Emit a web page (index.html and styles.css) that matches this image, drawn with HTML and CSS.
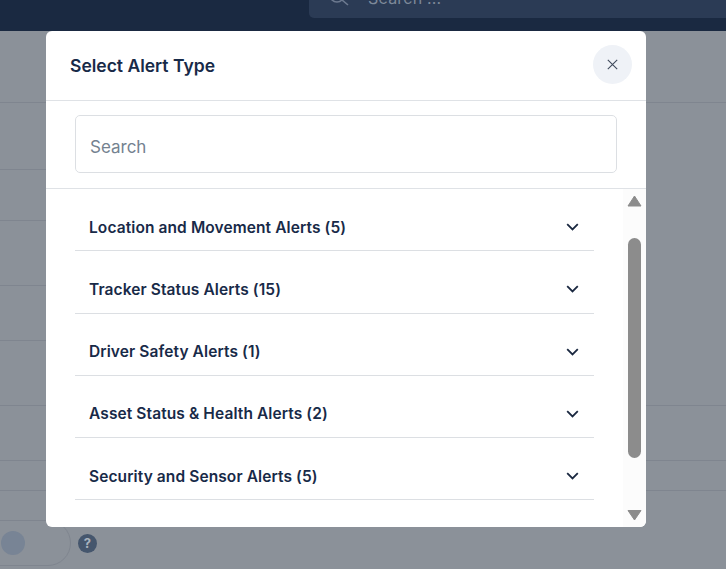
FILE: index.html
```html
<!DOCTYPE html>
<html lang="en">
<head>
<meta charset="utf-8">
<title>Select Alert Type</title>
<link rel="stylesheet" href="styles.css">
</head>
<body>
<header class="topbar">
  <div class="topsearch">
    <svg class="topsearch-icon" width="22" height="22" viewBox="0 0 22 22"><circle cx="8" cy="-5" r="7" fill="none" stroke="#6d7a90" stroke-width="1.6"/><path d="M13 0l6 5" stroke="#6d7a90" stroke-width="1.6" fill="none"/></svg>
    <span class="topsearch-text">Search ...</span>
  </div>
</header>
<main class="page">
  <div class="bgrow h71"></div>
  <div class="bgrow h67 short"></div>
  <div class="bgrow h51 short"></div>
  <div class="bgrow h65 short"></div>
  <div class="bgrow h55 short"></div>
  <div class="bgrow h65"></div>
  <div class="bgrow h55"></div>
  <div class="bgrow h30"></div>
  <div class="footer">
    <div class="toggle"><span class="knob"></span></div>
    <span class="help">?</span>
  </div>
</main>
<section class="modal">
  <div class="modal-head">
    <h2 class="modal-title">Select Alert Type</h2>
    <button class="close" type="button" aria-label="Close">
      <svg width="11" height="11" viewBox="0 0 11 11"><path d="M.8.8l9.4 9.4M10.2.8L.8 10.2" stroke="#3f4a5c" stroke-width="1.1" fill="none"/></svg>
    </button>
  </div>
  <div class="modal-search">
    <div class="input">Search</div>
  </div>
  <div class="modal-body">
    <ul class="list">
      <li class="item"><span>Location and Movement Alerts (5)</span><svg class="chev" width="13" height="8" viewBox="0 0 13 8"><path d="M1.2 1.2l5.300 5.300 5.300-5.300" stroke="#1a2840" stroke-width="1.8" fill="none"/></svg></li>
      <li class="item"><span>Tracker Status Alerts (15)</span><svg class="chev" width="13" height="8" viewBox="0 0 13 8"><path d="M1.2 1.2l5.300 5.300 5.300-5.300" stroke="#1a2840" stroke-width="1.8" fill="none"/></svg></li>
      <li class="item"><span>Driver Safety Alerts (1)</span><svg class="chev" width="13" height="8" viewBox="0 0 13 8"><path d="M1.2 1.2l5.300 5.300 5.300-5.300" stroke="#1a2840" stroke-width="1.8" fill="none"/></svg></li>
      <li class="item"><span>Asset Status &amp; Health Alerts (2)</span><svg class="chev" width="13" height="8" viewBox="0 0 13 8"><path d="M1.2 1.2l5.300 5.300 5.300-5.300" stroke="#1a2840" stroke-width="1.8" fill="none"/></svg></li>
      <li class="item"><span>Security and Sensor Alerts (5)</span><svg class="chev" width="13" height="8" viewBox="0 0 13 8"><path d="M1.2 1.2l5.300 5.300 5.300-5.300" stroke="#1a2840" stroke-width="1.8" fill="none"/></svg></li>
    </ul>
    <div class="scrollbar">
      <svg width="15" height="12" viewBox="0 0 15 12"><path d="M7.500 1L14 11H1z" fill="#8c8c8c" stroke="#8c8c8c" stroke-linejoin="round"/></svg>
      <div class="thumb"></div>
      <svg width="15" height="11" viewBox="0 0 15 11"><path d="M7.500 10L14 .5H1z" fill="#8c8c8c" stroke="#8c8c8c" stroke-linejoin="round"/></svg>
    </div>
  </div>
</section>
</body>
</html>
```
FILE: styles.css
```css
* { box-sizing: border-box; }
html, body { margin: 0; height: 100%; }
body {
  width: 726px;
  height: 569px;
  overflow: hidden;
  background: #8b9199;
  font-family: "Inter", "Liberation Sans", sans-serif;
  color: #182a48;
  position: relative;
}
.topbar {
  height: 31px;
  background: #1a2941;
  padding-left: 309px;
}
.topsearch {
  height: 18px;
  background: #2b3b55;
  border-bottom-left-radius: 5px;
  display: flex;
  overflow: hidden;
  position: relative;
}
.topsearch-icon { margin-left: 20px; flex: none; }
.topsearch-text {
  margin-left: 17px;
  margin-top: -12px;
  font-size: 16px;
  line-height: 20px;
  color: #7d8999;
  letter-spacing: .2px;
}
.page { display: flex; flex-direction: column; }
.bgrow { border-bottom: 1px solid #7f858f; flex: none; }
.short { width: 100px; }
.h71 { height: 72px; }
.h67 { height: 67px; }
.h51 { height: 51px; }
.h65 { height: 65px; }
.h55 { height: 55px; }
.h30 { height: 30px; }
.footer {
  display: flex;
  align-items: center;
  margin-top: 29px;
  margin-left: -27px;
  gap: 7px;
}
.toggle {
  width: 98px;
  height: 46px;
  border: 1px solid #7f858f;
  border-radius: 23px;
  display: flex;
  align-items: center;
  padding-left: 27px;
}
.knob {
  width: 24px;
  height: 24px;
  border-radius: 50%;
  background: #788495;
}
.help {
  width: 19px;
  height: 19px;
  border-radius: 50%;
  background: #45566d;
  color: #a9b2bd;
  font-size: 13px;
  font-weight: 700;
  line-height: 19px;
  text-align: center;
}
.modal {
  position: absolute;
  left: 46px;
  top: 31px;
  width: 600px;
  height: 496px;
  background: #fff;
  border-radius: 6px;
  display: flex;
  flex-direction: column;
  overflow: hidden;
}
.modal-head {
  height: 70px;
  flex: none;
  border-bottom: 1px solid #dfe2e6;
  display: flex;
  align-items: center;
  justify-content: space-between;
  padding: 0 14px 0 24px;
}
.modal-title {
  margin: 0;
  font-size: 17.5px;
  font-weight: 600;
  line-height: 22px;
  color: #182a48;
}
.close {
  width: 39px;
  height: 39px;
  margin-top: -2px;
  border: 0;
  padding: 0;
  border-radius: 50%;
  background: #eff2f7;
  display: flex;
  align-items: center;
  justify-content: center;
}
.modal-search {
  height: 88px;
  flex: none;
  border-bottom: 1px solid #dfe2e6;
  padding: 14px 29px 0;
}
.input {
  height: 58px;
  border: 1px solid #dcdfe3;
  border-radius: 5px;
  padding: 5px 0 0 14px;
  display: flex;
  align-items: center;
  font-size: 17px;
  color: #748290;
}
.modal-body {
  flex: 1;
  min-height: 0;
  display: flex;
}
.list {
  list-style: none;
  margin: 0;
  padding: 0 0 0 29px;
  width: 548px;
  flex: none;
}
.item {
  height: 62.25px;
  border-bottom: 1px solid #dcdfe3;
  display: flex;
  align-items: center;
  justify-content: space-between;
  padding: 15px 15px 0 14px;
  font-size: 15.5px;
  letter-spacing: .1px;
  font-weight: 600;
  color: #182a48;
}
.scrollbar {
  margin-left: 29px;
  width: 23px;
  background: #fcfcfc;
  display: flex;
  flex-direction: column;
  align-items: center;
  padding: 6px 0 6px;
}
.thumb {
  width: 13px;
  height: 220px;
  margin: 31px 0 auto;
  border-radius: 7px;
  background: #8c8c8c;
}
```
